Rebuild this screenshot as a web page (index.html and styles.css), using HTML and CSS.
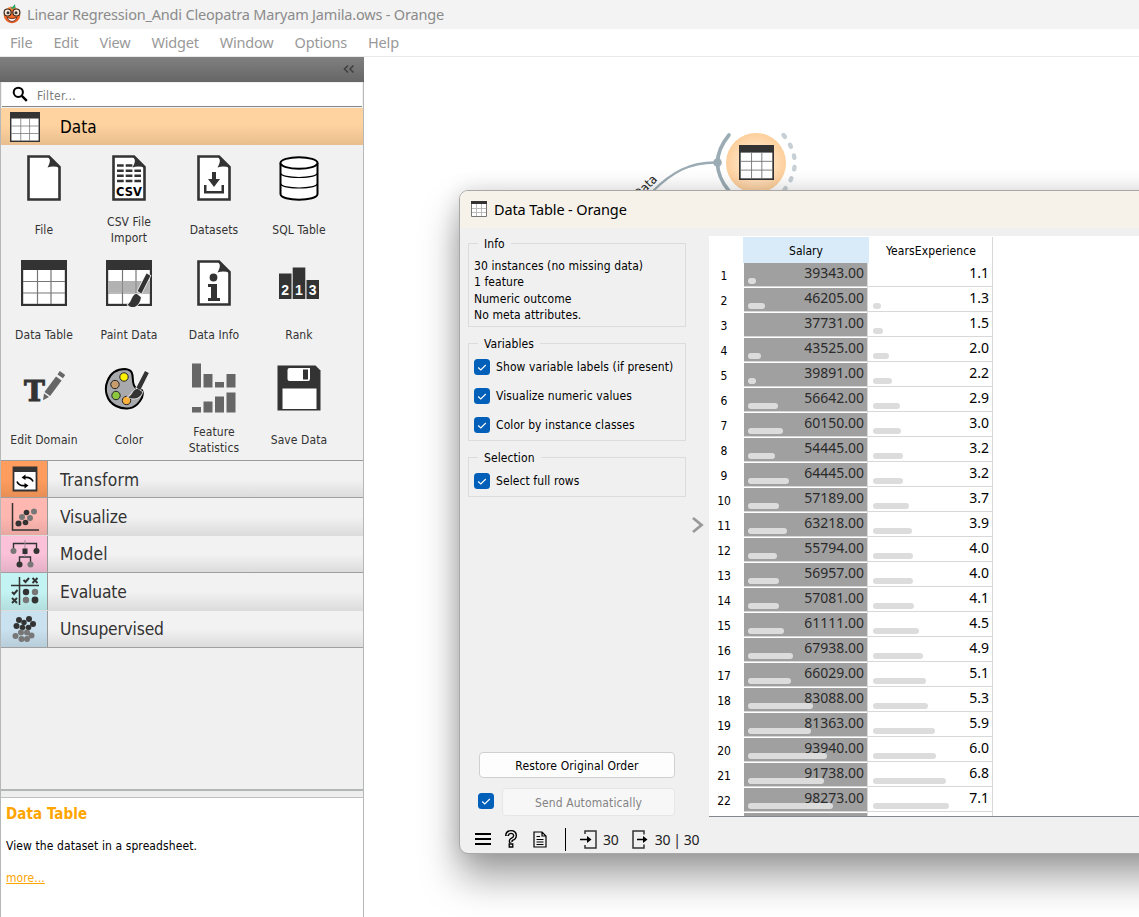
FILE: index.html
```
<!DOCTYPE html>
<html lang="en">
<head>
<meta charset="utf-8">
<title>Linear Regression - Orange</title>
<link rel="stylesheet" href="styles.css">
</head>
<body>
<svg class="defs" width="0" height="0">
  <defs>
    <linearGradient id="g" x1="0" y1="0" x2="0" y2="1"><stop offset="0" stop-color="#ff8a3c"/><stop offset="1" stop-color="#e8541c"/></linearGradient>
    <radialGradient id="node"><stop offset="0" stop-color="#ffe6cc"/><stop offset=".55" stop-color="#ffdfbc"/><stop offset="1" stop-color="#fdcf9b"/></radialGradient>
    <symbol id="table" viewBox="0 0 46 46"><rect x="1" y="1" width="44" height="44" fill="#fff" stroke="#333" stroke-width="2.4"/><rect x="0" y="0" width="46" height="10" fill="#333"/><path d="M16.5 10v34M30 10v34M2 21.5h42M2 33h42" stroke="#777" stroke-width="1.2" fill="none"/></symbol>
    <symbol id="page" viewBox="0 0 34 46"><path d="M1.5 1.5H22L32.5 12V44.500H1.500Z" fill="#fff" stroke="#333" stroke-width="2.600"/><path d="M21 1C24 5 23 8 20.500 12.500Q27 10.500 33 13L22 1Z" fill="#333"/></symbol>
    <symbol id="brush" viewBox="0 0 24 40"><path d="M20 1.500L10.500 20L14.500 22.500L24 4Z M9.500 23C4 24 5 31 0 34.500C5 40 13 36 14 26.500Z" fill="#333" stroke="#f1f1f1" stroke-width="1.600" paint-order="stroke"/></symbol>
    <symbol id="check" viewBox="0 0 16 16"><rect width="16" height="16" rx="3.500" fill="#005fb8"/><path d="M4.200 8.500l2.600 2.500 5-5" fill="none" stroke="#fff" stroke-width="1.100"/></symbol>
  </defs>
</svg>
<header class="titlebar">
  <svg width="20" height="20" viewBox="0 0 20 20"><circle cx="10" cy="11" r="8.300" fill="url(#g)"/><path d="M8 2l2 1.500L13 0l.5 4L10 5z" fill="#2da567"/><circle cx="5.600" cy="8.500" r="3.500" fill="#ffe9d8" stroke="#3a2720" stroke-width="1.200"/><circle cx="14.400" cy="8.500" r="3.500" fill="#ffe9d8" stroke="#3a2720" stroke-width="1.200"/><circle cx="6" cy="8.700" r="1.500" fill="#333"/><circle cx="14" cy="8.700" r="1.500" fill="#333"/><path d="M5 13.500Q10 16 15 13.500Q13.500 17.500 10 17.500T5 13.500Z" fill="#fff" stroke="#502010" stroke-width=".8"/></svg>
  <span>Linear Regression_Andi Cleopatra Maryam Jamila.ows - Orange</span>
</header>
<nav class="menu"><span>File</span><span>Edit</span><span>View</span><span>Widget</span><span>Window</span><span>Options</span><span>Help</span></nav>
<div class="main">
  <aside class="dock">
    <div class="dock-head"><svg width="12" height="10" viewBox="0 0 12 10"><path d="M5 1.500L1.500 5 5 8.500M10.500 1.500L7 5l3.500 3.500" fill="none" stroke="#404040" stroke-width="1.600"/></svg></div>
    <div class="filter"><svg width="17" height="17" viewBox="0 0 17 17"><circle cx="6.300" cy="6.300" r="4.600" fill="none" stroke="#000" stroke-width="2"/><path d="M9.800 9.800l5 5" stroke="#000" stroke-width="2.500"/></svg><span>Filter...</span></div>
    <div class="data-tab"><svg width="30" height="30"><use href="#table"/></svg><span>Data</span></div>
    <div class="widgets">
      <div class="widget"><div class="pic"><svg width="34" height="46"><use href="#page"/></svg></div><p>File</p></div>
      <div class="widget"><div class="pic"><svg width="34" height="46" viewBox="0 0 34 46"><use href="#page"/><path d="M5 10.500h16M5 15.800h24M5 20.800h24M5 26h24" stroke="#333" stroke-width="2.400" stroke-dasharray="6.700 2"/><text x="17" y="41" class="csv">CSV</text></svg></div><p>CSV File<br>Import</p></div>
      <div class="widget"><div class="pic"><svg width="34" height="46" viewBox="0 0 34 46"><use href="#page"/><path d="M15 17h4v7h4l-6 8-6-8h4zM7 30h2.500v6h15v-6H27v8.500H7z" fill="#333"/></svg></div><p>Datasets</p></div>
      <div class="widget"><div class="pic"><svg width="40" height="46" viewBox="0 0 40 46"><path d="M1.500 8v31c0 7.500 37 7.500 37 0V8" fill="#fff" stroke="#000" stroke-width="2"/><ellipse cx="20" cy="8" rx="18.500" ry="5.800" fill="#fff" stroke="#000" stroke-width="2"/><path d="M1.500 18c1 6 36 6 37 0M1.500 28.500c1 6 36 6 37 0" fill="none" stroke="#000" stroke-width="1.200"/></svg></div><p>SQL Table</p></div>
      <div class="widget"><div class="pic"><svg width="46" height="46"><use href="#table"/></svg></div><p>Data Table</p></div>
      <div class="widget"><div class="pic"><svg width="46" height="48" viewBox="0 0 46 48"><use href="#table" y="1" width="46" height="46"/><path d="M2.200 22h41.600v11H2.200z" fill="#b2b2b2"/><path d="M16.500 22v11M30 22v11" stroke="#888"/><use href="#brush" x="19" y="13" width="28" height="38"/></svg></div><p>Paint Data</p></div>
      <div class="widget"><div class="pic"><svg width="34" height="46" viewBox="0 0 34 46"><use href="#page"/><circle cx="16.500" cy="17.500" r="3.900" fill="#333"/><path d="M11 24h9v14h3v3H11v-3h3V27h-3z" fill="#333"/></svg></div><p>Data Info</p></div>
      <div class="widget"><div class="pic"><svg width="42" height="46" viewBox="0 0 42 46"><path d="M1 13.500h12.500V39H1zM14.700 7.500h12.600V39H14.700zM28.500 20H41v19H28.500z" fill="#333"/><g class="ranks"><text x="7.200" y="35">2</text><text x="21" y="35">1</text><text x="34.700" y="35">3</text></g></svg></div><p>Rank</p></div>
      <div class="widget"><div class="pic"><svg width="42" height="46" viewBox="0 0 42 46"><text x="11.500" y="36" class="tee">T</text><g fill="#666"><path d="M34.500 9.500l2.200-3.500 5.500 4-2.200 3.200zM33 11.500l5.600 4-11.500 15.500-5.600-4zM21 28.500l5 3.600-6 3.200z"/></g></svg></div><p>Edit Domain</p></div>
      <div class="widget"><div class="pic"><svg class="palette" width="46" height="46" viewBox="0 0 46 46"><path d="M21 4C34 5 25 18 32 23C39 22 41 29 36 36C30 45 20 45 12 41C2 36 0 24 3.500 16Q8 4 21 4Z" fill="#a8a9ad" stroke="#000" stroke-width="2"/><circle cx="20" cy="12" r="4.200" fill="#fff200" stroke="#222"/><circle cx="11" cy="19.500" r="4.200" fill="#c69c6d" stroke="#222"/><circle cx="12" cy="30.500" r="4.200" fill="#8cc63f" stroke="#222"/><circle cx="22.500" cy="35.500" r="4.200" fill="#fbb03b" stroke="#222"/><path d="M41 6l3.800 2-8.500 17-4-2.200zM24 32c5-2 5-9 10-8l4.500 3c-2 7-10 8-14.500 5z" fill="#333" stroke="#f1f1f1" stroke-width="1.500" paint-order="stroke"/></svg></div><p>Color</p></div>
      <div class="widget"><div class="pic"><svg width="46" height="52" viewBox="0 0 46 52"><path d="M1 1.500h9v24H1zM12.500 12h9v13.500h-9zM24 20h9v5.500h-9zM35.500 12h9v13.500h-9zM1 45h9v5.500H1zM12.500 39.500h9v11h-9zM24 34.500h9v16h-9zM35.500 30.500h9v20h-9z" fill="#666"/></svg></div><p>Feature<br>Statistics</p></div>
      <div class="widget"><div class="pic"><svg width="44" height="46" viewBox="0 0 44 46"><path d="M.5.500H38.500l5 5V45.500H.5z" fill="#333"/><path d="M5.500 23.500h34V44h-34zM12.500 3h20.500v11q0 2-2 2H12.500q-2 0-2-2V5q0-2 2-2z" fill="#fff"/><path d="M26 4.500h5V14.500h-5z" fill="#333"/></svg></div><p>Save Data</p></div>
    </div>
    <div class="tabs">
      <div class="tab"><div class="swatch transform"><svg width="26" height="26" viewBox="0 0 26 26"><path d="M1.500 1.500h23v23h-23z" fill="#fff" stroke="#333" stroke-width="1.800"/><path d="M1 1h24v5H1z" fill="#333"/><path d="M12 11.500q7-1 9 4M14 19.500q-7 1-9-4" fill="none" stroke="#000" stroke-width="1.700"/><path d="M13.500 8.500v5.500l-4-2.500zM12.500 17v5.500l4-3z"/></svg></div><span>Transform</span></div>
      <div class="tab"><div class="swatch visualize"><svg width="30" height="30" viewBox="0 0 30 30"><path d="M2.500 1v27H29" fill="none" stroke="#333" stroke-width="1.500"/><g fill="#333"><circle cx="8.500" cy="21.500" r="3"/><circle cx="15.500" cy="20.500" r="2.800"/><circle cx="16.500" cy="10.500" r="2.800"/></g><g fill="#777"><circle cx="12" cy="15" r="3"/><circle cx="20" cy="16" r="3"/><circle cx="24" cy="9.500" r="3"/></g></svg></div><span>Visualize</span></div>
      <div class="tab"><div class="swatch model"><svg width="30" height="30" viewBox="0 0 30 30"><path d="M3.500 10V4.500h23V10M9.500 23v-5h11v5" fill="none" stroke="#333" stroke-width="1.400"/><path d="M15 1v9M15 14v4" stroke="#a88a9a"/><circle cx="3.500" cy="12" r="3" fill="#777"/><circle cx="26.500" cy="12" r="3" fill="#333"/><path d="M12.500 9.500h5v5.500h-5z" fill="#333"/><circle cx="9.500" cy="25.500" r="3" fill="#333"/><circle cx="20.500" cy="25.500" r="3" fill="#777"/></svg></div><span>Model</span></div>
      <div class="tab"><div class="swatch evaluate"><svg width="30" height="30" viewBox="0 0 30 30"><path d="M1 9.500h28M9.500 1v28" stroke="#333" stroke-width="1.500"/><path d="M13.500 4l2 2 3.500-4M2 16l2 2 3.500-4M22.500 2l5 5m0-5l-5 5M2 22l5 5m0-5l-5 5" stroke="#333" stroke-width="1.900" fill="none"/><g fill="#333"><circle cx="16" cy="16" r="3.200"/><circle cx="25" cy="24" r="3.400"/></g><g fill="#777"><circle cx="25" cy="16" r="3.200"/><circle cx="16" cy="24" r="3.200"/></g></svg></div><span>Evaluate</span></div>
      <div class="tab"><div class="swatch unsupervised"><svg width="28" height="30" viewBox="0 0 28 30"><g fill="#333"><circle cx="8" cy="6" r="3"/><circle cx="18" cy="5" r="3"/><circle cx="13" cy="8.500" r="2.700"/><circle cx="5.500" cy="12" r="3"/><circle cx="22" cy="10" r="3"/><circle cx="11.500" cy="13.500" r="2.800"/><circle cx="17.500" cy="13.500" r="2.800"/></g><g fill="#777"><circle cx="10" cy="18.500" r="3"/><circle cx="16" cy="18.500" r="3"/><circle cx="4.500" cy="22" r="3"/><circle cx="20.500" cy="21.500" r="3"/><circle cx="10.500" cy="25" r="3"/><circle cx="16" cy="25" r="3"/></g></svg></div><span>Unsupervised</span></div>
    </div>
    <div class="spacer"></div>
    <div class="splitter"></div>
    <div class="help"><h3>Data Table</h3><p>View the dataset in a spreadsheet.</p><a>more...</a></div>
  </aside>
  <section class="canvas">
    <svg class="flow" width="220" height="100" viewBox="600 120 220 100">
      <path d="M652 192C672 172 690 162 717 162.500" fill="none" stroke="#9cacb4" stroke-width="2.300"/>
      <path d="M729 135Q706 163 729 191" fill="none" stroke="#9cacb4" stroke-width="3.600" stroke-linecap="round"/>
      <circle cx="717.500" cy="162.500" r="4.300" fill="#9cacb4"/>
      <path d="M783.500 135Q806 163 783.500 191" fill="none" stroke="#c7d0d4" stroke-width="4.400" stroke-linecap="round" stroke-dasharray="2.300 9.300"/>
      <circle cx="756" cy="163" r="30" fill="url(#node)"/>
      <use href="#table" x="739" y="145" width="35" height="35"/>
      <text class="link-label" transform="translate(639 199) rotate(-45)">Data</text>
    </svg>
    <div class="window">
      <div class="window-title"><svg width="16" height="16" viewBox="0 0 16 16"><path d="M.5.500h15v15H.5z" fill="#fff" stroke="#777"/><path d="M0 0h16v3H0z" fill="#333"/><path d="M5.500 3v12M10.500 3v12M1 7.500h14M1 11.500h14" stroke="#bbb"/></svg><span>Data Table - Orange</span></div>
      <div class="window-body">
        <div class="controls">
          <fieldset class="info"><legend>Info</legend>30 instances (no missing data)<br>1 feature<br>Numeric outcome<br>No meta attributes.</fieldset>
          <fieldset class="vars"><legend>Variables</legend>
            <label><svg width="16" height="16"><use href="#check"/></svg><span>Show variable labels (if present)</span></label>
            <label><svg width="16" height="16"><use href="#check"/></svg><span>Visualize numeric values</span></label>
            <label><svg width="16" height="16"><use href="#check"/></svg><span>Color by instance classes</span></label>
          </fieldset>
          <fieldset class="sel"><legend>Selection</legend>
            <label><svg width="16" height="16"><use href="#check"/></svg><span>Select full rows</span></label>
          </fieldset>
          <div class="buttons">
            <div class="button">Restore Original Order</div>
            <div class="send"><svg width="16" height="16"><use href="#check"/></svg><div class="button off">Send Automatically</div></div>
          </div>
        </div>
        <div class="handle"><svg width="13" height="18" viewBox="0 0 13 18"><path d="M2 2l8.500 7L2 16" fill="none" stroke="#999" stroke-width="2.800"/></svg></div>
        <div class="sheet">
          <div class="row head"><span></span><div class="s">Salary</div><div class="y">YearsExperience</div></div>
          <div class="row"><span>1</span><div class="s">39343.00<i style="width:8.1px"></i></div><div class="y">1.1</div></div>
          <div class="row"><span>2</span><div class="s">46205.00<i style="width:17.1px"></i></div><div class="y">1.3<i style="width:8.4px"></i></div></div>
          <div class="row"><span>3</span><div class="s">37731.00</div><div class="y">1.5<i style="width:10.7px"></i></div></div>
          <div class="row"><span>4</span><div class="s">43525.00<i style="width:13.6px"></i></div><div class="y">2.0<i style="width:16.6px"></i></div></div>
          <div class="row"><span>5</span><div class="s">39891.00<i style="width:8.8px"></i></div><div class="y">2.2<i style="width:19px"></i></div></div>
          <div class="row"><span>6</span><div class="s">56642.00<i style="width:30.8px"></i></div><div class="y">2.9<i style="width:27.3px"></i></div></div>
          <div class="row"><span>7</span><div class="s">60150.00<i style="width:35.4px"></i></div><div class="y">3.0<i style="width:28.4px"></i></div></div>
          <div class="row"><span>8</span><div class="s">54445.00<i style="width:27.9px"></i></div><div class="y">3.2<i style="width:30.8px"></i></div></div>
          <div class="row"><span>9</span><div class="s">64445.00<i style="width:41px"></i></div><div class="y">3.2<i style="width:30.8px"></i></div></div>
          <div class="row"><span>10</span><div class="s">57189.00<i style="width:31.5px"></i></div><div class="y">3.7<i style="width:36.7px"></i></div></div>
          <div class="row"><span>11</span><div class="s">63218.00<i style="width:39.4px"></i></div><div class="y">3.9<i style="width:39.1px"></i></div></div>
          <div class="row"><span>12</span><div class="s">55794.00<i style="width:29.7px"></i></div><div class="y">4.0<i style="width:40.2px"></i></div></div>
          <div class="row"><span>13</span><div class="s">56957.00<i style="width:31.2px"></i></div><div class="y">4.0<i style="width:40.2px"></i></div></div>
          <div class="row"><span>14</span><div class="s">57081.00<i style="width:31.4px"></i></div><div class="y">4.1<i style="width:41.4px"></i></div></div>
          <div class="row"><span>15</span><div class="s">61111.00<i style="width:36.7px"></i></div><div class="y">4.5<i style="width:46.2px"></i></div></div>
          <div class="row"><span>16</span><div class="s">67938.00<i style="width:45.6px"></i></div><div class="y">4.9<i style="width:50.9px"></i></div></div>
          <div class="row"><span>17</span><div class="s">66029.00<i style="width:43.1px"></i></div><div class="y">5.1<i style="width:53.2px"></i></div></div>
          <div class="row"><span>18</span><div class="s">83088.00<i style="width:65.5px"></i></div><div class="y">5.3<i style="width:55.6px"></i></div></div>
          <div class="row"><span>19</span><div class="s">81363.00<i style="width:63.2px"></i></div><div class="y">5.9<i style="width:62.7px"></i></div></div>
          <div class="row"><span>20</span><div class="s">93940.00<i style="width:79.7px"></i></div><div class="y">6.0<i style="width:63.9px"></i></div></div>
          <div class="row"><span>21</span><div class="s">91738.00<i style="width:76.8px"></i></div><div class="y">6.8<i style="width:73.3px"></i></div></div>
          <div class="row"><span>22</span><div class="s">98273.00<i style="width:85.4px"></i></div><div class="y">7.1<i style="width:76.9px"></i></div></div>
          <div class="row"><span></span><div class="s"></div><div class="y"></div></div>
        </div>
      </div>
      <div class="status">
        <svg width="16" height="14" viewBox="0 0 16 14"><path d="M0 2h16M0 7h16M0 12h16" stroke="#000" stroke-width="2.200"/></svg>
        <svg class="q" width="14" height="18" viewBox="0 0 14 18"><path d="M3 6Q3 2 7 2t4 3.500Q11 8 8.500 9T7 12.500" fill="none" stroke="#000" stroke-width="4"/><path d="M3 5.500Q3.500 2 7 2t4 3.500Q11 8 8.500 9T7 12" fill="none" stroke="#f0f0f0" stroke-width="1.300"/><path d="M5.200 14h3.600v3H5.200z" fill="#f0f0f0" stroke="#000" stroke-width="1.300"/></svg>
        <svg class="doc" width="14" height="17" viewBox="0 0 14 17"><path d="M1 1h8l4 4v11H1zM9 1v4h4M3.500 5.500H7M3.500 8.500h7M3.500 11h7M3.500 13.500h7" fill="none" stroke="#000" stroke-width="1.200"/></svg>
        <b></b>
        <svg width="17" height="19" viewBox="0 0 17 19"><path d="M5 4V1h11v17H5v-3" fill="none" stroke="#333" stroke-width="1.500"/><path d="M0 9.500h8" stroke="#000" stroke-width="1.500"/><path d="M7 6l4.500 3.500L7 13z"/></svg>
        <span class="in">30</span>
        <svg width="17" height="19" viewBox="0 0 17 19"><path d="M12 4.500V1H1v17h11v-3.500" fill="none" stroke="#333" stroke-width="1.500"/><path d="M5 9.500h7" stroke="#000" stroke-width="1.500"/><path d="M11 6l4.500 3.500L11 13z"/></svg>
        <span class="out">30 | 30</span>
      </div>
    </div>
  </section>
</div>
</body>
</html>
```
FILE: styles.css
```
* { box-sizing: border-box; }
body { margin: 0; width: 1139px; height: 917px; overflow: hidden; background: #fff; font: 12px/16px "DejaVu Sans Condensed", "DejaVu Sans", sans-serif; color: #000; display: flex; flex-direction: column; }
svg { display: block; flex: none; }
.defs { position: absolute; }
p, h3 { margin: 0; }
.titlebar { height: 29px; background: #f3f3f3; display: flex; align-items: center; gap: 5px; padding: 0 0 2px 2px; font: 14.5px/20px "Noto Sans", sans-serif; letter-spacing: -0.19px; color: #8b8b8b; white-space: nowrap; }
.menu { height: 28px; border-bottom: 1px solid #e9e9e9; display: flex; gap: 21px; padding: 2px 0 0 10px; font: 14.500px/22px "Noto Sans", sans-serif; letter-spacing: -0.2px; color: #999; }
.main { flex: 1; display: flex; min-height: 0; }
.dock { width: 364px; border-left: 1px solid #b4b8b8; border-right: 1px solid #b4b8b8; background: #f0f0f0; display: flex; flex-direction: column; color: #333; }
.dock-head { height: 25px; margin: 0 -1px; background: linear-gradient(#808080, #666); display: flex; justify-content: flex-end; align-items: center; padding: 0 9px 2px 0; }
.filter { height: 24px; margin: 1px 1px 0; background: #fff; border-bottom: 1px solid #868686; display: flex; align-items: center; gap: 8px; padding-left: 10px; color: #7a7a7a; letter-spacing: 0.35px; }
.filter span { padding-top: 2px; }
.data-tab { height: 37px; margin-top: 1px; background: linear-gradient(#ffd3a0 0, #ffd3a0 45%, #e8be8e); display: flex; align-items: center; gap: 20px; padding-left: 9px; font-size: 17px; color: #000; }
.widgets { height: 315px; background: #f1f1f1; display: grid; grid-template-columns: repeat(4, 85px); grid-auto-rows: 105px; letter-spacing: 0.1px; }
.widget { display: flex; flex-direction: column; align-items: center; text-align: center; }
.pic { height: 68px; display: flex; align-items: center; padding-bottom: 2px; }
.palette { margin-right: 3px; }
.widget p { height: 33px; display: flex; align-items: center; white-space: nowrap; padding-left: 1px; }
.csv { font: bold 11.500px "DejaVu Sans", sans-serif; text-anchor: middle; letter-spacing: 0; }
.ranks { font: bold 14px "Liberation Sans", sans-serif; fill: #fff; text-anchor: middle; }
.tee { font: bold 28px "DejaVu Serif", serif; text-anchor: middle; fill: #333; stroke: #333; stroke-width: 1px; }
.tabs { border-top: 1px solid #9b9b9b; }
.tab { height: 37.400px; display: flex; align-items: center; gap: 12px; font-size: 17.300px; border-bottom: 1px solid #a0a0a0; background: linear-gradient(#f2f2f2 50%, #dcdcdc); }
.tab > span { padding-top: 1px; }
.tab:first-child, .tab:nth-child(3) { letter-spacing: 0.25px; }
.tab:nth-child(2), .tab:nth-child(4) { border-bottom-color: #dcdcdc; letter-spacing: -0.15px; }
.tab:last-child { letter-spacing: -0.2px; }
.swatch { width: 47px; height: 100%; border-right: 1px solid #999; display: flex; align-items: center; justify-content: center; padding-left: 1px; }
.transform { background: linear-gradient(#ff9d5e 50%, #e88f55); }
.visualize { background: linear-gradient(#ffb7b1 50%, #e9a7a2); }
.model { background: linear-gradient(#fac1d9 50%, #e4b0c6); }
.evaluate { background: linear-gradient(#c3f3f3 50%, #b2dedd); }
.unsupervised { background: linear-gradient(#cae1ef 50%, #b8cdda); }
.spacer { flex: 1; }
.splitter { height: 9px; border-top: 2px solid #b2b6b5; border-bottom: 1px solid #bfc1c1; background: #eee; }
.help { height: 119px; background: #fff; padding: 7px 5px; color: #000; letter-spacing: 0.09px; }
.help h3 { font-size: 15px; line-height: 18px; color: #ffa500; letter-spacing: 0.08px; }
.help p { margin: 15px 0 16px; }
.help a { color: #ffa500; text-decoration: underline; }
.canvas { flex: 1; position: relative; overflow: hidden; background: #fff; }
.flow { position: absolute; left: 236px; top: 63px; }
.link-label { font-size: 12.500px; fill: #222; }
.window { position: absolute; left: 95px; top: 133px; width: 800px; height: 664px; border: 1px solid #a8a8a8; border-radius: 9px; background: #f0f0f0; box-shadow: 0 24px 38px rgba(0,0,0,.36), 0 0 22px rgba(0,0,0,.14); overflow: hidden; display: flex; flex-direction: column; }
.window-title { height: 37px; background: #f6f2ea; display: flex; align-items: center; gap: 7px; padding: 0 0 2px 11px; font: 14.500px/20px "Noto Sans", sans-serif; letter-spacing: -0.13px; }
.window-body { height: 589px; display: flex; }
.controls { width: 226px; padding: 7px 0 0 8px; display: flex; flex-direction: column; }
fieldset { margin: 0 0 8px; border: 1px solid #dcdcdc; padding: 0 0 0 5px; white-space: nowrap; line-height: 16.400px; letter-spacing: 0.09px; }
legend { padding: 1px 6px 0; margin-left: 4px; line-height: 16px; }
.info { height: 92px; padding-top: 6px; }
.vars { height: 106px; }
.sel { height: 48px; }
label { display: flex; align-items: center; gap: 6px; height: 29px; }
label span { padding-top: 2px; }
.buttons { margin-top: auto; padding: 0 11px 1px; display: flex; flex-direction: column; gap: 10px; }
.button { height: 26px; border: 1px solid #d0d0d0; border-radius: 4px; background: #fdfdfd; display: flex; align-items: center; justify-content: center; letter-spacing: 0.12px; padding-top: 1px; }
.send { display: flex; align-items: center; gap: 8px; margin-left: -1px; }
.send svg { margin-bottom: 2px; }
.off { flex: 1; height: 28px; color: #838383; border-color: #e6e6e6; background: #f7f7f7; }
.handle { width: 23px; display: flex; align-items: center; justify-content: center; padding-top: 5px; }
.sheet { flex: 1; margin-top: 8px; height: 581px; overflow: hidden; background: #fff; border-bottom: 1px solid #828790; padding-top: 1px; }
.row { height: 25px; display: grid; grid-template-columns: 35px 124px 125px; grid-template-rows: 25px; font: 14px/22px "Noto Sans", sans-serif; }
.row span { font: 12px/28px "DejaVu Sans Condensed", sans-serif; text-align: center; padding-right: 5px; }
.row div { position: relative; text-align: right; }
.row .s { background: linear-gradient(#a0a0a0, #a0a0a0) 0 1px / 123px 23px no-repeat; border-bottom: 1px solid #d8d8d8; border-right: 1px solid #d8d8d8; color: #2b2b2b; padding-right: 3px; }
.row .y { border-bottom: 1px solid #d8d8d8; border-right: 1px solid #d8d8d8; padding-right: 3px; }
.row i { position: absolute; left: 3.500px; top: 16px; height: 6px; border-radius: 3px; background: #dcdcdc; }
.row .y i { left: 4.500px; }
.row.head div { font: 12px/28px "DejaVu Sans Condensed", sans-serif; text-align: center; }
.row.head .s { height: 26px; z-index: 1; margin: 0 -1px; background: #d9ebf9; border: 0; color: #000; padding: 0; }
.row.head .y { border-bottom: 0; padding: 0 0 0 2px; letter-spacing: 0.1px; }
.status { height: 36px; display: flex; align-items: center; padding: 8px 0 0 15px; font: 14px/20px "Noto Sans", sans-serif; letter-spacing: -0.2px; color: #222; }
.status .q { margin-left: 13px; }
.status .doc { margin-left: 15px; }
.status b { width: 1px; height: 23px; background: #000; margin: 0 14px 0 18px; }
.status span { padding-top: 1px; }
.in { margin: 0 13px 0 6px; }
.out { margin-left: 6px; word-spacing: -0.5px; }
```
